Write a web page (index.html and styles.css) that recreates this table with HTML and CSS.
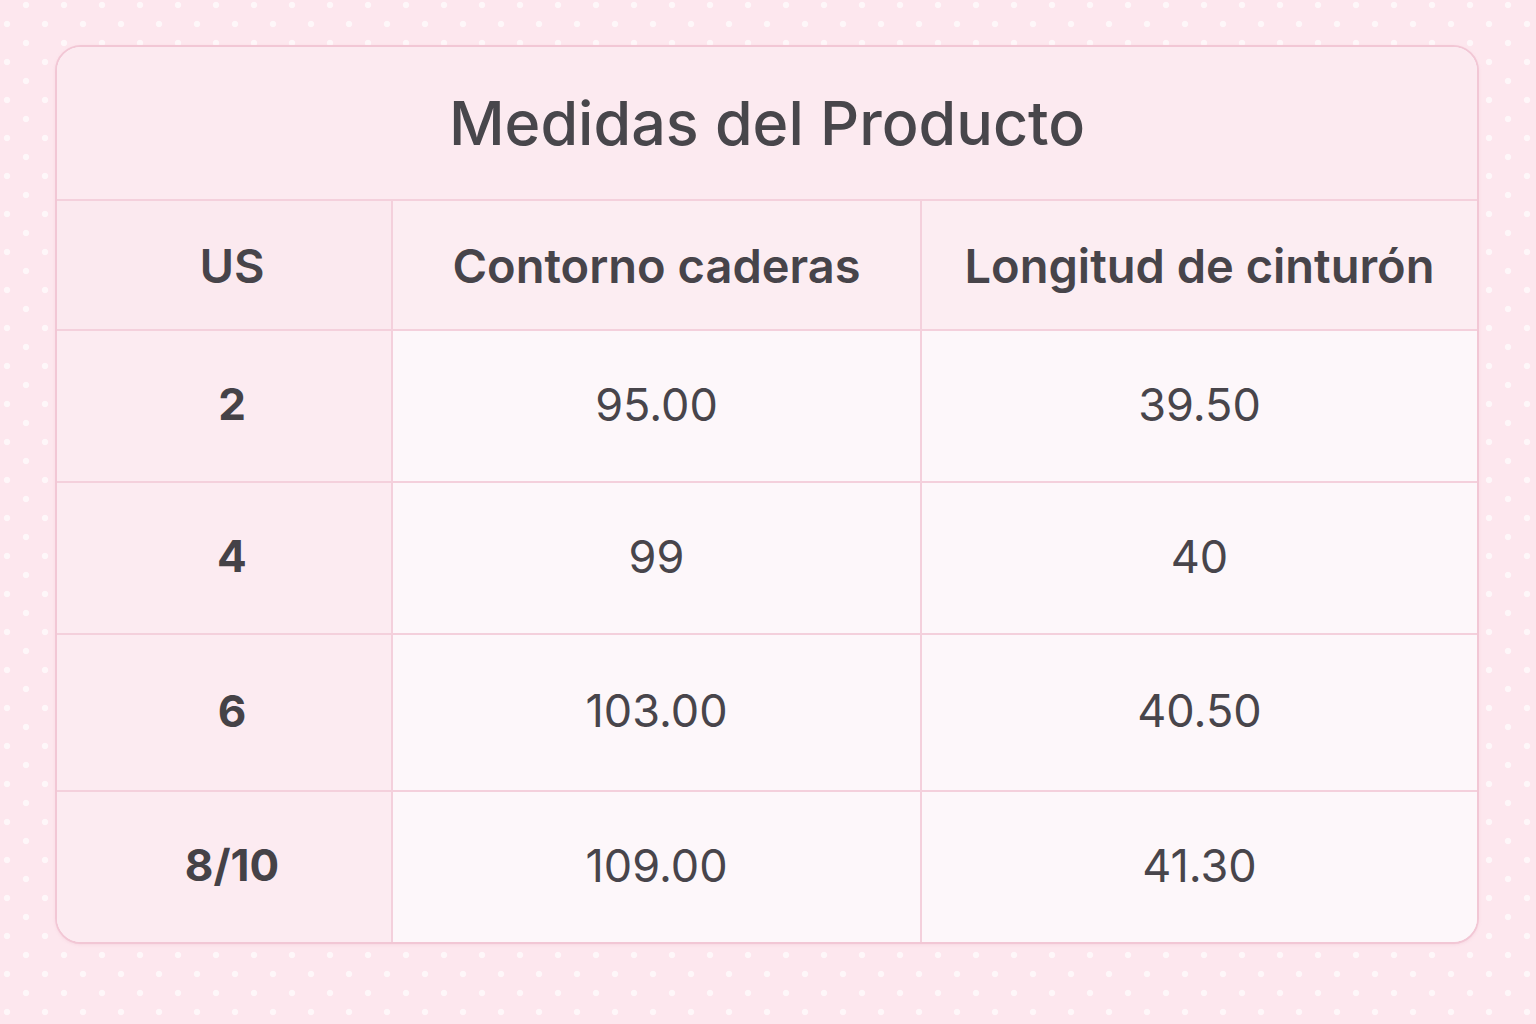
FILE: index.html
```html
<!DOCTYPE html>
<html lang="es">
<head>
<meta charset="utf-8">
<title>Medidas del Producto</title>
<link rel="stylesheet" href="styles.css">
</head>
<body>
<div class="page">
  <div class="card">
    <div class="title">Medidas del Producto</div>
    <div class="table">
      <div class="cell head first">US</div>
      <div class="cell head">Contorno caderas</div>
      <div class="cell head last">Longitud de cinturón</div>

      <div class="cell size first">2</div>
      <div class="cell">95.00</div>
      <div class="cell last">39.50</div>

      <div class="cell size first">4</div>
      <div class="cell">99</div>
      <div class="cell last">40</div>

      <div class="cell size first tall">6</div>
      <div class="cell tall">103.00</div>
      <div class="cell last tall">40.50</div>

      <div class="cell size first bottom">8/10</div>
      <div class="cell bottom">109.00</div>
      <div class="cell last bottom">41.30</div>
    </div>
  </div>
</div>
</body>
</html>
```

FILE: styles.css
```css
html, body {
  margin: 0;
  padding: 0;
}
body {
  width: 1536px;
  height: 1024px;
  overflow: hidden;
  background-color: #fde7ee;
  background-image:
    radial-gradient(circle, rgba(255,255,255,0.65) 2.8px, transparent 3.6px),
    radial-gradient(circle, rgba(255,255,255,0.65) 2.8px, transparent 3.6px);
  background-size: 38px 38px, 38px 38px;
  background-position: 7px -14px, 26px 5px;
  font-family: "Inter", "Open Sans", sans-serif;
  color: #47444a;
}
.page {
  padding: 45px 0 0 55px;
}
.card {
  width: 1420px;
  height: 895px;
  border: 2px solid #f2c7d5;
  border-radius: 26px;
  overflow: hidden;
  background: #fdf8fb;
  display: flex;
  flex-direction: column;
  box-shadow: 0 1px 3px rgba(230, 170, 190, 0.25);
}
.title {
  height: 152px;
  display: flex;
  align-items: center;
  justify-content: center;
  background: #fceaf0;
  font-size: 61px;
  font-weight: 500;
  color: #48464b;
  padding-bottom: 0;
  box-sizing: border-box;
}
.table {
  flex: 1;
  display: grid;
  grid-template-columns: 336px 529px 1fr;
  grid-template-rows: 130px 152px 152px 157px 1fr;
  border-top: 2px solid #f4d0dc;
}
.cell {
  display: flex;
  align-items: center;
  justify-content: center;
  font-size: 45px;
  font-weight: 400;
  color: #48454b;
  border-right: 2px solid #f4d0dc;
  border-bottom: 2px solid #f4d0dc;
  background: #fdf7fa;
  padding-bottom: 4px;
  box-sizing: border-box;
}
.cell.last {
  border-right: none;
}
.cell.bottom {
  border-bottom: none;
}
.cell.first {
  background: #fcebf1;
  padding-left: 16px;
}
.cell.head {
  background: #fcedf2;
  font-size: 47px;
  font-weight: 600;
  color: #47444a;
  padding-bottom: 0;
}
.cell.head.first {
  background: #fbe9ef;
}
.cell.size {
  font-weight: 700;
  font-size: 44px;
  color: #454247;
}
```
